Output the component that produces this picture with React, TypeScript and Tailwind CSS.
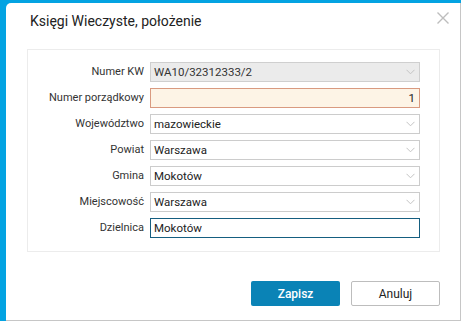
import React from "react";

const Chevron = () => (
  <svg width="9" height="6" viewBox="0 0 9 6" className="absolute right-[4px] top-1/2 -translate-y-1/2">
    <path d="M0.5 0.8 L4.5 4.8 L8.5 0.8" fill="none" stroke="#c4c4c4" strokeWidth="1" />
  </svg>
);

type Row = { label: string; value: string; kind: "disabled" | "required" | "select" | "focused" };

const rows: Row[] = [
  { label: "Numer KW", value: "WA10/32312333/2", kind: "disabled" },
  { label: "Numer porządkowy", value: "1", kind: "required" },
  { label: "Województwo", value: "mazowieckie", kind: "select" },
  { label: "Powiat", value: "Warszawa", kind: "select" },
  { label: "Gmina", value: "Mokotów", kind: "select" },
  { label: "Miejscowość", value: "Warszawa", kind: "select" },
  { label: "Dzielnica", value: "Mokotów", kind: "focused" },
];

function Field({ row }: { row: Row }) {
  if (row.kind === "disabled")
    return (
      <div className="relative h-[20px] w-[270px] border border-[#cfcfcf] bg-[#ebebeb] pl-[3px] text-[11.5px] leading-[18px] text-[#333]">
        {row.value}
        <Chevron />
      </div>
    );
  if (row.kind === "required")
    return (
      <div className="h-[20px] w-[270px] border border-[#d99a80] bg-[#fdf4e6] pr-[4px] text-right text-[11.5px] leading-[18px] text-[#222]">
        {row.value}
      </div>
    );
  if (row.kind === "focused")
    return (
      <div className="h-[20px] w-[270px] border border-[#155e80] bg-white pl-[3px] text-[11.5px] leading-[18px] text-[#222]">
        {row.value}
      </div>
    );
  return (
    <div className="relative h-[20px] w-[270px] border border-[#cccccc] bg-white pl-[3px] text-[11.5px] leading-[18px] text-[#222]">
      {row.value}
      <Chevron />
    </div>
  );
}

export default function App() {
  return (
    <div
      className="h-[321px] w-[461px] overflow-hidden bg-[#03a3e2] pl-[6px] pt-[3px]"
      style={{ fontFamily: "Roboto, 'Noto Sans', sans-serif" }}
    >
      <div className="flex h-[318px] w-[455px] flex-col rounded-tl-[5px] border-b border-r border-[#c6c6c6] bg-white">
        <div className="relative h-[46px]">
          <div className="pl-[24px] pt-[8px] text-[14px] leading-[20px] text-[#222]">Księgi Wieczyste, położenie</div>
          <svg width="12" height="12" viewBox="0 0 12 12" className="absolute left-[431px] top-[9px]">
            <path d="M0.5 0.5 L11.5 11.5 M11.5 0.5 L0.5 11.5" stroke="#bdbdbd" strokeWidth="1.4" fill="none" />
          </svg>
        </div>
        <div className="ml-[21px] flex w-[413px] flex-col gap-[6px] border border-[#ececec] pb-[13px] pt-[12px]">
          {rows.map((r) => (
            <div key={r.label} className="flex items-center">
              <div className="w-[116px] text-right text-[11px] text-[#333]">{r.label}</div>
              <div className="ml-[6px]">
                <Field row={r} />
              </div>
            </div>
          ))}
        </div>
        <div className="mt-[29px] flex justify-end gap-[11px] pr-[20px]">
          <button className="h-[25px] w-[89px] rounded-[2px] bg-[#0a83b6] text-[12px] font-medium text-white">Zapisz</button>
          <button className="h-[25px] w-[89px] rounded-[2px] border border-[#bdbdbd] bg-white text-[12px] text-[#222]">Anuluj</button>
        </div>
      </div>
    </div>
  );
}
